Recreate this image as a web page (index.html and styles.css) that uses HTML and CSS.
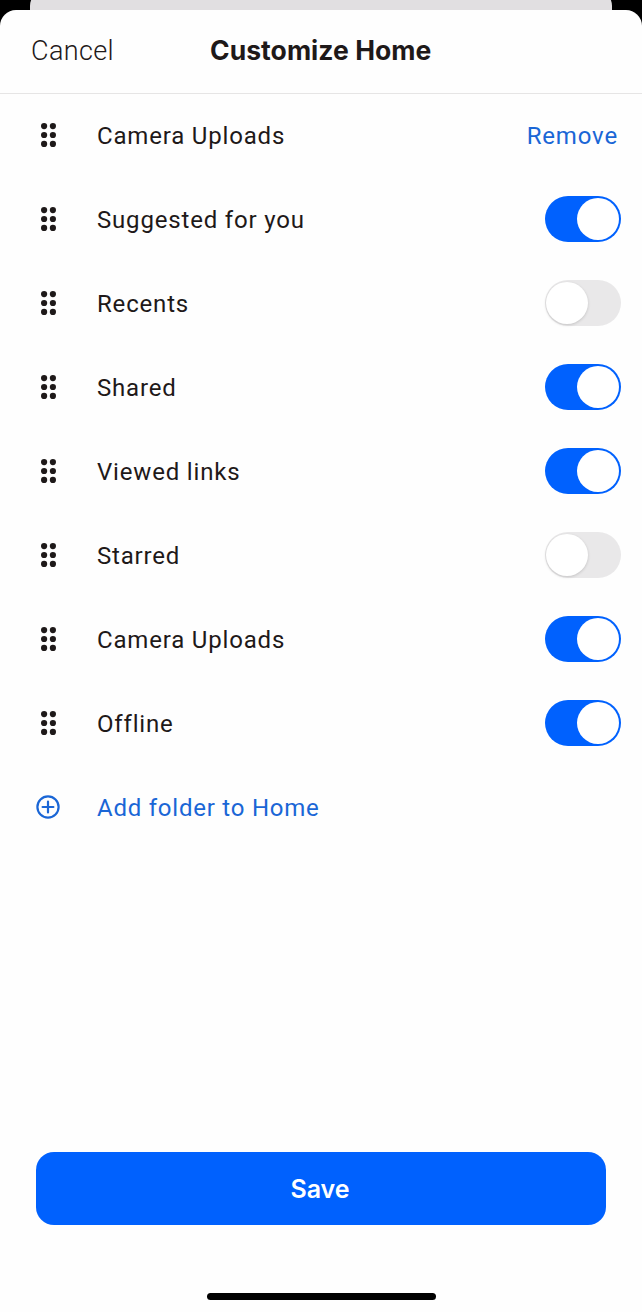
FILE: index.html
```html
<!DOCTYPE html>
<html lang="en">
<head>
<meta charset="utf-8">
<title>Customize Home</title>
<link rel="stylesheet" href="styles.css">
</head>
<body>
<div class="screen">
  <div class="backcard"></div>
  <main class="sheet">
    <header class="header">
      <span class="cancel">Cancel</span>
      <h1 class="title">Customize Home</h1>
    </header>
    <ul class="list">
      <li class="row"><svg class="grip" viewBox="0 0 15 24"><use href="#dots"/></svg><span class="label">Camera Uploads</span><span class="remove">Remove</span></li>
      <li class="row"><svg class="grip" viewBox="0 0 15 24"><use href="#dots"/></svg><span class="label">Suggested for you</span><span class="toggle on"><i class="knob"></i></span></li>
      <li class="row"><svg class="grip" viewBox="0 0 15 24"><use href="#dots"/></svg><span class="label">Recents</span><span class="toggle"><i class="knob"></i></span></li>
      <li class="row"><svg class="grip" viewBox="0 0 15 24"><use href="#dots"/></svg><span class="label">Shared</span><span class="toggle on"><i class="knob"></i></span></li>
      <li class="row"><svg class="grip" viewBox="0 0 15 24"><use href="#dots"/></svg><span class="label">Viewed links</span><span class="toggle on"><i class="knob"></i></span></li>
      <li class="row"><svg class="grip" viewBox="0 0 15 24"><use href="#dots"/></svg><span class="label">Starred</span><span class="toggle"><i class="knob"></i></span></li>
      <li class="row"><svg class="grip" viewBox="0 0 15 24"><use href="#dots"/></svg><span class="label">Camera Uploads</span><span class="toggle on"><i class="knob"></i></span></li>
      <li class="row"><svg class="grip" viewBox="0 0 15 24"><use href="#dots"/></svg><span class="label">Offline</span><span class="toggle on"><i class="knob"></i></span></li>
      <li class="row add">
        <svg class="plus" viewBox="0 0 24 24" fill="none" stroke="currentColor" stroke-width="2.2" stroke-linecap="round"><circle cx="12" cy="12" r="10.6"/><path d="M12 6.6v10.8M6.6 12h10.8"/></svg>
        <span class="label addlabel">Add folder to Home</span>
      </li>
    </ul>
    <div class="footer">
      <button class="save">Save</button>
      <div class="homebar"></div>
    </div>
  </main>
</div>
<svg class="defs" width="0" height="0"><defs><g id="dots" fill="#1e1919"><circle cx="3.1" cy="3.1" r="3.1"/><circle cx="11.9" cy="3.1" r="3.1"/><circle cx="3.1" cy="12" r="3.1"/><circle cx="11.9" cy="12" r="3.1"/><circle cx="3.1" cy="20.9" r="3.1"/><circle cx="11.9" cy="20.9" r="3.1"/></g></defs></svg>
</body>
</html>
```
FILE: styles.css
```css
* { box-sizing: border-box; }
html, body { margin: 0; padding: 0; background: #000; }
.screen { width: 642px; height: 1312px; position: relative; overflow: hidden; background: #000; font-family: Roboto, "Liberation Sans", sans-serif; color: #1e1919; }
.backcard { position: absolute; top: -10px; left: 30px; width: 582px; height: 40px; background: #e1dfe1; border-radius: 16px; }
.sheet { position: absolute; top: 10px; left: 0; width: 642px; height: 1302px; background: #fefefe; border-radius: 16px 16px 0 0; display: flex; flex-direction: column; }
.header { height: 84px; flex: none; border-bottom: 1px solid #e6e5e5; position: relative; display: flex; align-items: center; padding: 0 0 2px 31px; }
.cancel { font-size: 27px; letter-spacing: 0.35px; font-weight: 300; }
.title { position: absolute; left: 210px; top: 22px; margin: 0; font-family: Inter, sans-serif; font-size: 26.5px; line-height: 36px; font-weight: 700; letter-spacing: 0.05px; white-space: nowrap; }
.list { list-style: none; margin: 0; padding: 0; }
.row { height: 84px; display: flex; align-items: center; padding: 0 21px 0 41px; }
.grip { width: 15px; height: 24px; flex: none; margin: 0 41px 2px 0; }
.label { flex: 1; font-size: 24px; letter-spacing: 0.82px; white-space: nowrap; }
.remove { color: #1a66d6; font-size: 24px; letter-spacing: 0.85px; margin-right: 3px; }
.toggle { width: 76px; height: 46px; border-radius: 23px; background: #e9e8e9; flex: none; position: relative; margin-bottom: 2px; }
.toggle.on { background: #0061fe; }
.knob { position: absolute; top: 2px; left: 1px; width: 42px; height: 42px; border-radius: 50%; background: #fff; box-shadow: 0 1px 3px rgba(0,0,0,.16); }
.toggle.on .knob { left: 32px; box-shadow: none; }
.add { color: #1a66d6; padding-left: 36px; }
.plus { width: 24px; height: 24px; flex: none; margin: 0 37px 2px 0; }
.addlabel { color: #1a66d6; letter-spacing: 0.77px; }
.footer { margin-top: auto; display: flex; flex-direction: column; align-items: center; padding: 0 36px 12px; }
.save { width: 570px; height: 73px; border: 0; border-radius: 18px; background: #0061fe; color: #fff; font-family: Inter, sans-serif; font-size: 25px; font-weight: 600; margin-bottom: 68px; padding: 0 2px 0 0; }
.homebar { width: 229px; height: 7px; border-radius: 4px; background: #000; }
.defs { position: absolute; }
```
